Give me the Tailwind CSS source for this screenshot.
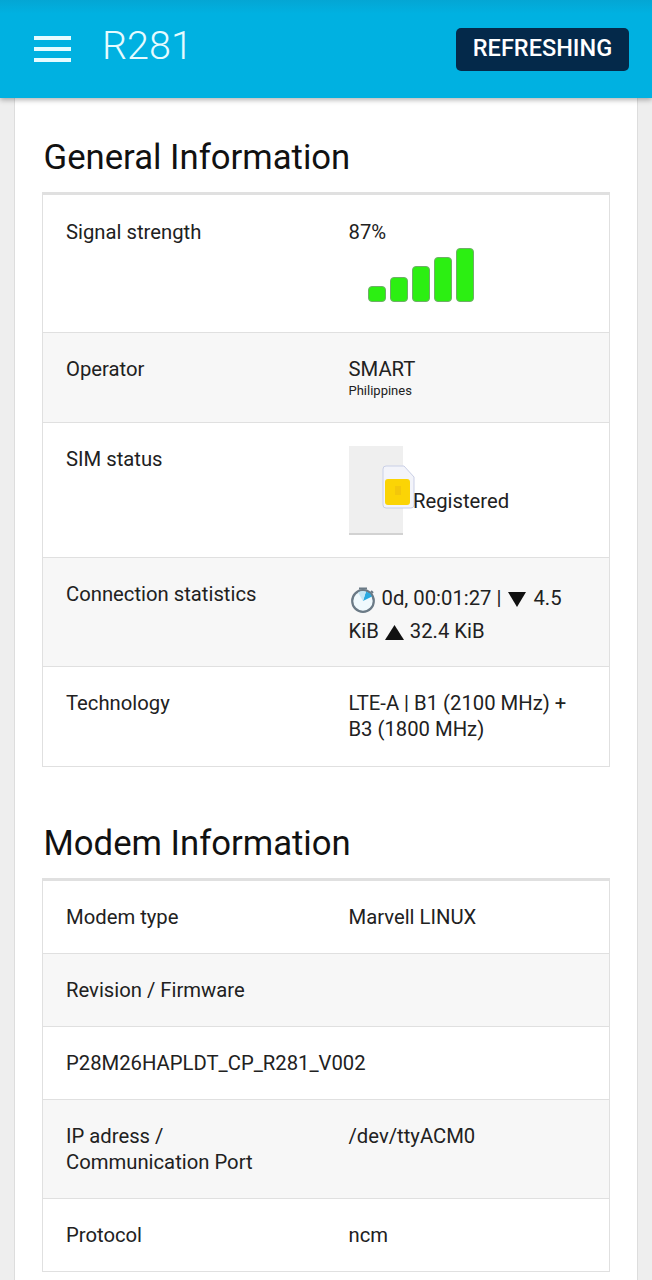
<!DOCTYPE html>
<html lang="en">
<head>
    <meta charset="UTF-8">
    <meta name="viewport" content="width=device-width, initial-scale=1.0">
    <title>R281</title>
    <script src="https://cdn.jsdelivr.net/npm/@tailwindcss/browser@4"></script>
</head>
<body class="bg-[#eeeeee] h-[1280px] overflow-hidden font-['Roboto',sans-serif] text-[#212121]">
    <!-- Top bar -->
    <header class="relative z-10 h-[98px] bg-linear-to-b from-[#04a6d4] to-[#00b1e1] to-[14%] shadow-[0_2px_5px_rgba(0,0,0,0.3)] flex items-center pl-[34px] pr-[23px]">
        <div class="w-[37px] flex flex-col gap-[7px]">
            <span class="block h-[4px] bg-[#e6fbff]"></span>
            <span class="block h-[4px] bg-[#e6fbff]"></span>
            <span class="block h-[4px] bg-[#e6fbff]"></span>
        </div>
        <h2 class="ml-[31px] text-[39.5px] font-light text-[#e6fbff] leading-none mb-[7px]">R281</h2>
        <button class="ml-auto h-[43px] w-[173px] rounded-[5px] bg-[#04294a] text-white text-[23.5px] font-medium leading-none">REFRESHING</button>
    </header>

    <!-- Card -->
    <main class="mx-[14px] bg-white border-x border-[#dddddd] px-[27px] pt-[39px] h-[1182px]">
        <h3 class="text-[34.7px] leading-[40px] text-[#111111] ml-[1.5px]">General Information</h3>
        <div class="mt-[15px] border border-t-[3px] border-[#e0e0e0] text-[20.25px] leading-[26px]">
            <div class="h-[137px] flex pl-[23px] pt-[24px]">
                <div class="w-[282.5px]">Signal strength</div>
                <div>
                    <div>87%</div>
                    <div class="ml-[19px] mt-[3px] flex items-end gap-[4px]">
                        <span class="block w-[18px] h-[16px] rounded-[4px] bg-[#2cef12] border border-[#6fae68]"></span>
                        <span class="block w-[18px] h-[25px] rounded-[4px] bg-[#2cef12] border border-[#6fae68]"></span>
                        <span class="block w-[18px] h-[36px] rounded-[4px] bg-[#2cef12] border border-[#6fae68]"></span>
                        <span class="block w-[18px] h-[45px] rounded-[4px] bg-[#2cef12] border border-[#6fae68]"></span>
                        <span class="block w-[18px] h-[54px] rounded-[4px] bg-[#2cef12] border border-[#6fae68]"></span>
                    </div>
                </div>
            </div>
            <div class="h-[90px] flex pl-[23px] pt-[23px] bg-[#f7f7f7] border-t border-[#e0e0e0]">
                <div class="w-[282.5px]">Operator</div>
                <div>
                    <div>SMART</div>
                    <div class="text-[13px] leading-[18px]">Philippines</div>
                </div>
            </div>
            <div class="h-[135px] flex pl-[23px] pt-[23px] border-t border-[#e0e0e0]">
                <div class="w-[282.5px]">SIM status</div>
                <div class="relative h-[89px] w-[54px] shrink-0 bg-[#efefef] border-b-2 border-[#d2d2d2]">
                    <svg class="absolute left-[33px] top-[19px]" width="33" height="44" viewBox="0 0 33 44">
                        <path d="M4 1h18l10 11v28a3 3 0 0 1-3 3H4a3 3 0 0 1-3-3V4a3 3 0 0 1 3-3z" fill="#f3f4fa" stroke="#c9cfe6"/>
                        <rect x="3" y="14" width="25" height="26" rx="3" fill="#fbd405"/>
                        <rect x="13" y="21" width="6" height="9" fill="#f3c70a"/>
                    </svg>
                    <span class="absolute left-[64.5px] top-[42px]">Registered</span>
                </div>
            </div>
            <div class="h-[109px] flex pl-[23px] pt-[23px] bg-[#f7f7f7] border-t border-[#e0e0e0]">
                <div class="w-[282.5px] shrink-0">Connection statistics</div>
                <div class="leading-[33px] mt-[1px] w-[230px]">
                    <svg class="inline-block align-[-8px] mr-[1px] ml-[1px]" width="26" height="26" viewBox="0 0 26 26">
                        <path d="M9 1.500h8M21 4l2 2" stroke="#6b7a86" stroke-width="2" fill="none"/>
                        <circle cx="13" cy="14" r="10.800" fill="#f0f9fd" stroke="#6b7a86" stroke-width="2.200"/>
                        <path d="M13 14L16 4.500A10 10 0 0 1 22 9.500z" fill="#29a9e0"/>
                        <path d="M13 14L8 5.500A10 10 0 0 1 16 4.500z" fill="#c4e6f5"/>
                    </svg>
                    0d, 00:01:27 | <svg class="inline-block mx-[2px]" width="18" height="15" viewBox="0 0 18 15"><path d="M0 0h18L9 15z" fill="#111111"/></svg> 4.5 KiB <svg class="inline-block mx-[1px]" width="19" height="15" viewBox="0 0 19 15"><path d="M0 15h19L9.500 0z" fill="#111111"/></svg> 32.4 KiB
                </div>
            </div>
            <div class="h-[100px] flex pl-[23px] pt-[23px] border-t border-[#e0e0e0]">
                <div class="w-[282.5px] shrink-0">Technology</div>
                <div class="w-[230px]">LTE-A | B1 (2100 MHz) + B3 (1800 MHz)</div>
            </div>
        </div>

        <h3 class="mt-[56px] text-[34.7px] leading-[40px] text-[#111111] ml-[1.5px]">Modem Information</h3>
        <div class="mt-[15px] border border-t-[3px] border-[#e0e0e0] text-[20.25px] leading-[26px]">
            <div class="h-[72px] flex pl-[23px] pt-[23px]">
                <div class="w-[282.5px]">Modem type</div>
                <div>Marvell LINUX</div>
            </div>
            <div class="h-[73px] flex pl-[23px] pt-[23px] bg-[#f7f7f7] border-t border-[#e0e0e0]">Revision / Firmware</div>
            <div class="h-[73px] flex pl-[23px] pt-[23px] border-t border-[#e0e0e0]">P28M26HAPLDT_CP_R281_V002</div>
            <div class="h-[99px] flex pl-[23px] pt-[23px] bg-[#f7f7f7] border-t border-[#e0e0e0]">
                <div class="w-[282.5px]">IP adress /<br>Communication Port</div>
                <div>/dev/ttyACM0</div>
            </div>
            <div class="h-[73px] flex pl-[23px] pt-[23px] border-t border-[#e0e0e0]">
                <div class="w-[282.5px]">Protocol</div>
                <div>ncm</div>
            </div>
        </div>
    </main>
</body>
</html>
